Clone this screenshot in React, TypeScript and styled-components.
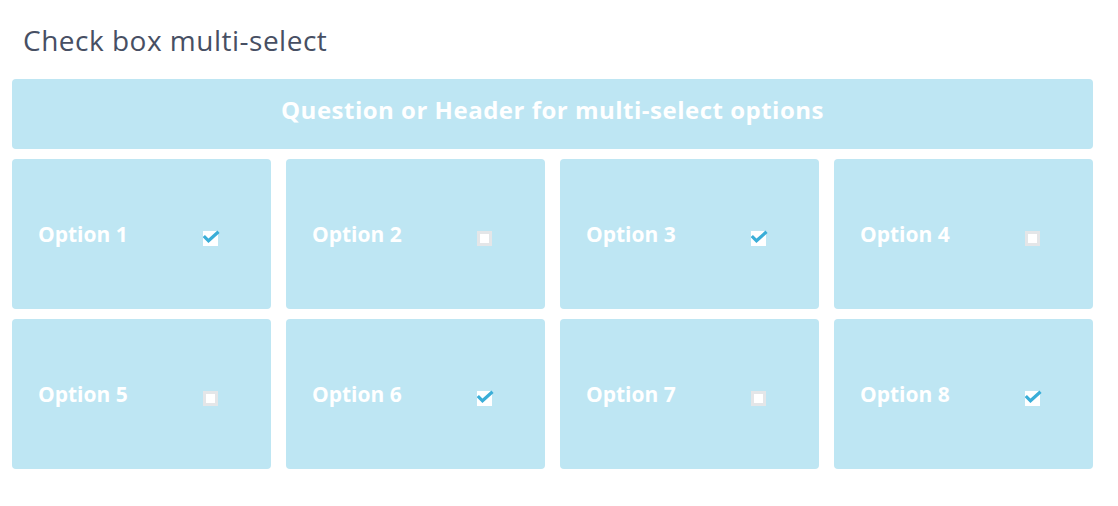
import styled, { createGlobalStyle } from "styled-components";

const GlobalStyle = createGlobalStyle`
  body {
    margin: 0;
    background: #fff;
    font-family: "Open Sans", "Noto Sans", sans-serif;
  }
`;

const Page = styled.div`
  width: 1081px;
  padding: 0 25px 0 12px;
`;

const Title = styled.h2`
  margin: 0;
  padding: 20px 0 0 11px;
  height: 79px;
  box-sizing: border-box;
  font-size: 28px;
  font-weight: 400;
  letter-spacing: 0.5px;
  color: #474f63;
  line-height: 40px;
`;

const Header = styled.div`
  height: 70px;
  box-sizing: border-box;
  padding-bottom: 9px;
  display: flex;
  align-items: center;
  justify-content: center;
  background: #bee6f3;
  border-radius: 4px;
  color: #fff;
  font-size: 24px;
  font-weight: 700;
  letter-spacing: 0.5px;
  margin-bottom: 10px;
`;

const Grid = styled.div`
  display: grid;
  grid-template-columns: repeat(4, 1fr);
  column-gap: 15px;
  row-gap: 10px;
`;

const Card = styled.label`
  height: 150px;
  display: flex;
  align-items: center;
  padding-left: 26px;
  background: #bee6f3;
  border-radius: 4px;
  cursor: pointer;
`;

const Label = styled.span`
  width: 165px;
  color: #fff;
  font-size: 21px;
  font-weight: 700;
`;

const Box = styled.span<{ $checked: boolean }>`
  position: relative;
  width: 15px;
  height: 15px;
  margin-top: 8px;
  box-sizing: border-box;
  background: #fff;
  border: ${(p) => (p.$checked ? "none" : "3px solid #e4e6e8")};
`;

const Tick = styled.svg`
  position: absolute;
  left: 0;
  top: -2px;
`;

const options = [
  { label: "Option 1", checked: true },
  { label: "Option 2", checked: false },
  { label: "Option 3", checked: true },
  { label: "Option 4", checked: false },
  { label: "Option 5", checked: false },
  { label: "Option 6", checked: true },
  { label: "Option 7", checked: false },
  { label: "Option 8", checked: true },
];

function App() {
  return (
    <Page>
      <GlobalStyle />
      <Title>Check box multi-select</Title>
      <Header>Question or Header for multi-select options</Header>
      <Grid>
        {options.map((o) => (
          <Card key={o.label}>
            <Label>{o.label}</Label>
            <Box $checked={o.checked}>
              {o.checked && (
                <Tick width="17" height="16" viewBox="0 0 17 16">
                  <path
                    d="M0.8 7 L5.5 11.8 L15.5 2.8"
                    fill="none"
                    stroke="#3aaed8"
                    strokeWidth="3.2"
                  />
                </Tick>
              )}
            </Box>
          </Card>
        ))}
      </Grid>
    </Page>
  );
}

export default App;
